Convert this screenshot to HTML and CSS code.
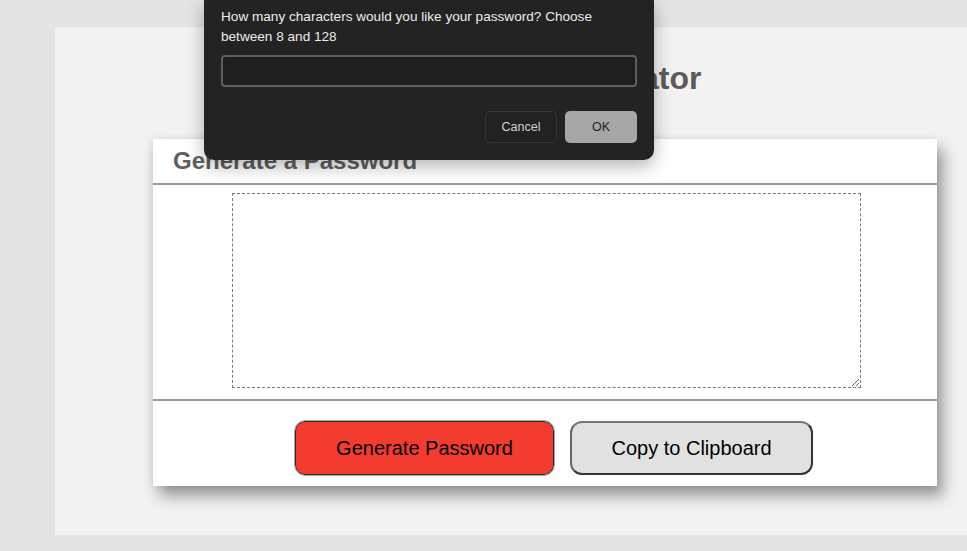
FILE: index.html
```html
<!DOCTYPE html>
<html lang="en">
<head>
<meta charset="UTF-8">
<title>Password Generator</title>
<link rel="stylesheet" href="styles.css">
</head>
<body>
<div class="wrapper">
  <header class="page-header">
    <h1>Password Generator</h1>
  </header>
  <div class="card">
    <div class="card-header">
      <h2>Generate a Password</h2>
    </div>
    <div class="card-body">
      <textarea class="password" readonly aria-label="Generated Password"></textarea>
    </div>
    <div class="card-footer">
      <button class="btn btn-generate">Generate Password</button>
      <button class="btn btn-copy">Copy to Clipboard</button>
    </div>
  </div>
</div>
<div class="dialog">
  <p class="dialog-text">How many characters would you like your password? Choose between 8 and 128</p>
  <div class="dialog-input"></div>
  <div class="dialog-actions">
    <button class="dlg-btn dlg-cancel">Cancel</button>
    <button class="dlg-btn dlg-ok">OK</button>
  </div>
</div>
</body>
</html>
```
FILE: styles.css
```css
* { box-sizing: border-box; }

html, body {
  margin: 0;
  padding: 0;
  overflow: hidden;
  height: 100%;
}

body {
  background: #e4e4e4;
  font-family: "Liberation Sans", Arial, sans-serif;
  padding-top: 27px;
}

.wrapper {
  margin-left: 55px;
  height: 508px;
  background: #f2f2f2;
  padding-top: 31px;
}

.page-header {
  padding-left: 68px;
}

.page-header h1 {
  margin: 0;
  text-align: center;
  font-size: 32px;
  line-height: 40px;
  font-weight: bold;
  color: #5b5b5b;
}

.card {
  margin: 41px 0 0 98px;
  width: 784px;
  background: #fff;
  box-shadow: 6px 10px 14px rgba(0, 0, 0, 0.38), -2px 0 8px rgba(0,0,0,0.08);
}

.card-header {
  height: 46px;
  padding: 0 20px;
  border-bottom: 2px solid #9a9a9a;
}

.card-header h2 {
  margin: 0;
  font-size: 24px;
  line-height: 44px;
  font-weight: bold;
  color: #5f5f5f;
}

.card-body {
  padding: 8px 0 11px;
  border-bottom: 2px solid #9a9a9a;
}

.password {
  display: block;
  width: 629px;
  height: 195px;
  margin: 0 0 0 79px;
  border: 1px dashed #7a7a7a;
  background: #fff;
  resize: both;
  outline: none;
}

.card-footer {
  display: flex;
  gap: 16px;
  padding: 20px 0 11px 142px;
}

.btn {
  height: 54px;
  font-family: "Liberation Sans", Arial, sans-serif;
  font-size: 20px;
  color: #000;
  border-radius: 10px;
  cursor: pointer;
}

.btn-generate {
  width: 259px;
  background: #f33b30;
  border: 1px solid #2a2a2a;
  outline: 1px solid #a8a8a8;
  outline-offset: 0;
}

.btn-copy {
  width: 243px;
  background: #e1e1e1;
  border: 2px solid #333;
  border-top-color: #777;
  border-left-color: #666;
  border-radius: 12px;
}

.dialog {
  position: absolute;
  top: 0;
  left: 204px;
  width: 450px;
  height: 160px;
  background: #232323;
  border-radius: 0 0 10px 10px;
  box-shadow: 0 6px 18px rgba(0, 0, 0, 0.3);
  padding: 7px 17px 17px;
  font-family: "Liberation Sans", Arial, sans-serif;
}

.dialog-text {
  margin: 0;
  font-size: 13.6px;
  line-height: 20px;
  color: #ececec;
  width: 400px;
}

.dialog-input {
  margin-top: 8px;
  height: 32px;
  width: 416px;
  background: #1e1e1e;
  border: 2px solid #5e5e5e;
  border-radius: 4px;
}

.dialog-actions {
  margin-top: 24px;
  display: flex;
  justify-content: flex-end;
  gap: 8px;
}

.dlg-btn {
  width: 72px;
  height: 32px;
  border-radius: 5px;
  font-family: "Liberation Sans", Arial, sans-serif;
  font-size: 12.5px;
}

.dlg-cancel {
  background: #222;
  border: 1px solid #353535;
  color: #cfcfcf;
}

.dlg-ok {
  background: #a6a6a6;
  border: none;
  color: #1d1d1d;
}
```
